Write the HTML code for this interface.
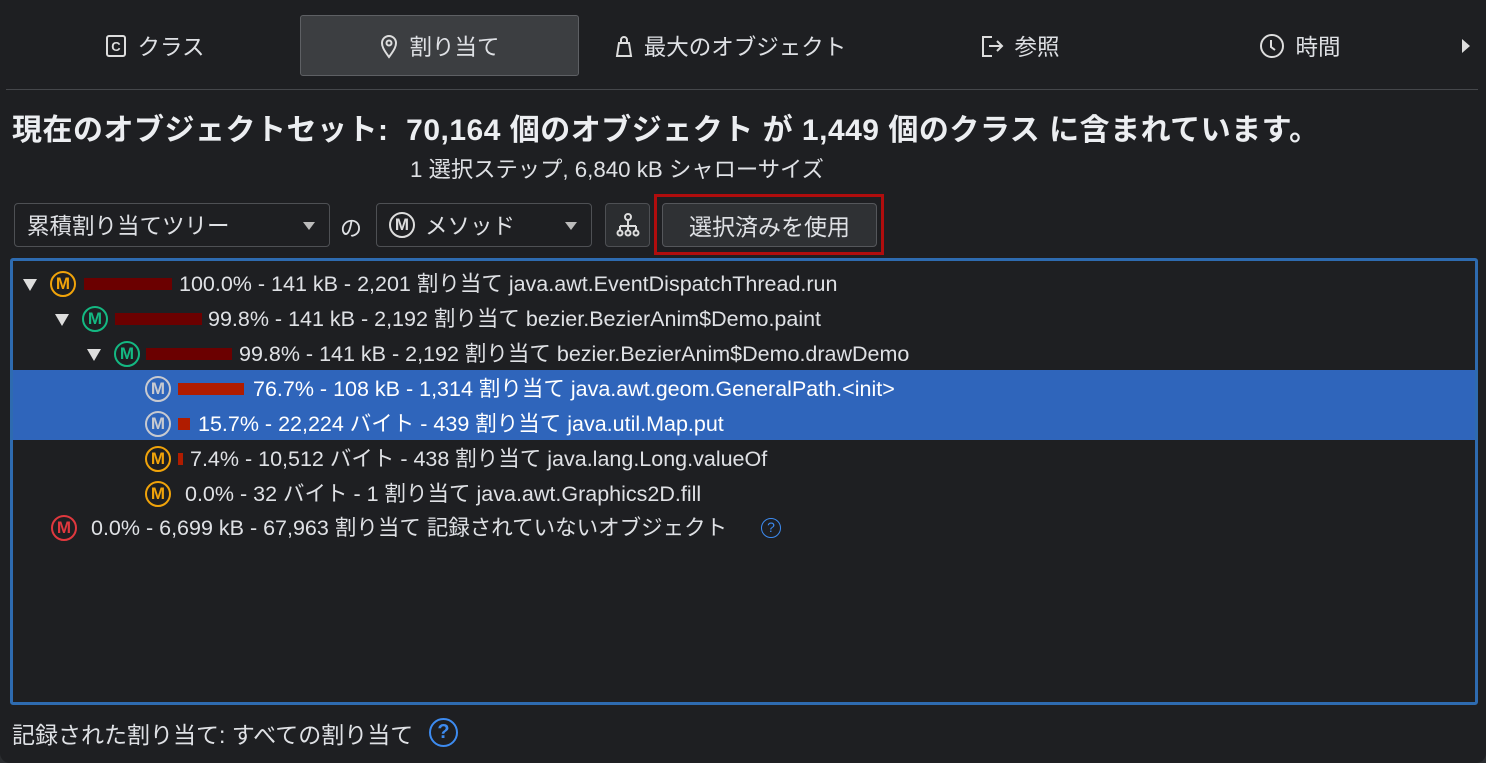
<!DOCTYPE html>
<html><head><meta charset="utf-8"><style>
*{box-sizing:border-box;margin:0;padding:0}
body{width:1486px;height:763px;background:#2b2d30;overflow:hidden;font-family:"Liberation Sans","Noto Sans CJK JP",sans-serif;color:#dfe1e5}
.page{position:absolute;left:0;top:0;width:1486px;height:763px;background:#1e1f22;border-radius:0 0 10px 10px}
.abs{position:absolute;white-space:nowrap}
.tab{position:absolute;top:15px;height:61px;display:flex;align-items:center;justify-content:center;font-size:22.5px;gap:10px}
.sel{background:#3c3e41;border:1px solid #5e6064;border-radius:3px}
.dd{position:absolute;top:203px;height:44px;background:#1e1f22;border:1px solid #4e5054;border-radius:4px;font-size:22.5px;display:flex;align-items:center;padding-left:12px}
.tri{position:absolute;right:14px;top:18px;width:0;height:0;border-left:6px solid transparent;border-right:6px solid transparent;border-top:8px solid #bbb}
.tree{position:absolute;left:10px;top:258px;width:1468px;height:447px;border:3px solid #2e6bb0;border-radius:3px}
.m{position:absolute;width:26px;height:26px;border-radius:50%;border:2.5px solid;font-size:17px;font-weight:bold;display:flex;align-items:center;justify-content:center}
.o{border-color:#f0a30a;color:#f0a30a}.g{border-color:#14b882;color:#14b882}.w{border-color:#c8cad0;color:#c8cad0}.r{border-color:#e0383e;color:#e0383e}
.bar{position:absolute;height:12px}
.ar{position:absolute;width:0;height:0;border-left:7px solid transparent;border-right:7px solid transparent;border-top:12px solid #ddd}
.t{position:absolute;font-size:21.5px;white-space:nowrap;line-height:26px}
</style></head><body><div class="page">
<div class="tab" style="left:30px;width:250px"><svg width="22" height="24"><rect x="2" y="2" width="18" height="20" rx="2" fill="none" stroke="#ddd" stroke-width="2"/><text x="11" y="17" font-size="13" font-weight="bold" fill="#ddd" text-anchor="middle" font-family="Liberation Sans">C</text></svg>クラス</div>
<div class="tab sel" style="left:300px;width:279px"><svg width="20" height="26"><path d="M10 24C4 16 3 13 3 10a7 7 0 0114 0c0 3-1 6-7 14z" fill="none" stroke="#ddd" stroke-width="2"/><circle cx="10" cy="10" r="2.5" fill="none" stroke="#ddd" stroke-width="2"/></svg>割り当て</div>
<div class="tab" style="left:600px;width:260px"><svg width="20" height="24"><path d="M3 22L5 9h10l2 13z M7 9V6a3 3 0 016 0v3" fill="none" stroke="#ddd" stroke-width="2"/></svg>最大のオブジェクト</div>
<div class="tab" style="left:900px;width:240px"><svg width="24" height="24"><path d="M12 3H3v19h9 M9 12h13 M17 7l5 5-5 5" fill="none" stroke="#ddd" stroke-width="2"/></svg>参照</div>
<div class="tab" style="left:1180px;width:240px"><svg width="26" height="26"><circle cx="13" cy="13" r="11" fill="none" stroke="#ddd" stroke-width="2"/><path d="M12 7v7l4 3" fill="none" stroke="#ddd" stroke-width="2"/></svg>時間</div>
<div class="abs" style="left:1462px;top:39px;border-top:7px solid transparent;border-bottom:7px solid transparent;border-left:8px solid #ddd"></div>
<div class="abs" style="left:6px;top:89px;width:1472px;height:1px;background:#45474b"></div>
<div class="abs" style="left:12px;top:105px;font-size:30px;font-weight:bold;color:#eceef1;letter-spacing:0.5px">現在のオブジェクトセット:&nbsp; 70,164 個のオブジェクト が 1,449 個のクラス に含まれています。</div>
<div class="abs" style="left:410px;top:152px;font-size:22.3px">1 選択ステップ, 6,840 kB シャローサイズ</div>
<div class="dd" style="left:14px;width:316px">累積割り当てツリー<div class="tri"></div></div>
<div class="abs" style="left:340px;top:211px;font-size:22px">の</div>
<div class="dd" style="left:376px;width:216px"><div class="m" style="position:static;margin-right:10px;border-color:#ddd;color:#ddd">M</div>メソッド<div class="tri"></div></div>
<div class="dd" style="left:605px;width:45px;padding:0;justify-content:center;background:#2b2d30"><svg width="24" height="26"><circle cx="12" cy="5" r="3" fill="none" stroke="#ddd" stroke-width="2"/><path d="M12 8v6M4 14h16M4 14v5M12 14v5M20 14v5" stroke="#ddd" stroke-width="2" fill="none"/><circle cx="4" cy="21" r="2.5" fill="none" stroke="#ddd" stroke-width="2"/><circle cx="12" cy="21" r="2.5" fill="none" stroke="#ddd" stroke-width="2"/><circle cx="20" cy="21" r="2.5" fill="none" stroke="#ddd" stroke-width="2"/></svg></div>
<div class="abs" style="left:654px;top:194px;width:230px;height:61px;border:3px solid #b00d0d"></div>
<div class="dd" style="left:662px;width:215px;background:#2f3134;justify-content:center;padding:0;border-color:#55575b;font-size:23px">選択済みを使用</div>
<div class="tree"></div>
<div class="abs" style="left:13px;top:370px;width:1462px;height:70px;background:#2f65bb"></div>

<div class="ar" style="left:23px;top:279px"></div><div class="m o" style="left:50px;top:271px">M</div><div class="bar" style="left:84px;top:278px;width:88px;background:#6b0000"></div><div class="t" style="left:179px;top:271px">100.0% - 141 kB - 2,201 割り当て java.awt.EventDispatchThread.run</div>

<div class="ar" style="left:55px;top:314px"></div><div class="m g" style="left:82px;top:306px">M</div><div class="bar" style="left:115px;top:313px;width:87px;background:#6b0000"></div><div class="t" style="left:208px;top:306px">99.8% - 141 kB - 2,192 割り当て bezier.BezierAnim$Demo.paint</div>

<div class="ar" style="left:87px;top:349px"></div><div class="m g" style="left:114px;top:341px">M</div><div class="bar" style="left:146px;top:348px;width:86px;background:#6b0000"></div><div class="t" style="left:239px;top:341px">99.8% - 141 kB - 2,192 割り当て bezier.BezierAnim$Demo.drawDemo</div>

<div class="m w" style="left:145px;top:376px">M</div><div class="bar" style="left:178px;top:383px;width:66px;background:#b01c00"></div><div class="t" style="left:253px;top:376px;color:#fff">76.7% - 108 kB - 1,314 割り当て java.awt.geom.GeneralPath.&lt;init&gt;</div>

<div class="m w" style="left:145px;top:411px">M</div><div class="bar" style="left:178px;top:418px;width:12px;background:#b01c00"></div><div class="t" style="left:198px;top:411px;color:#fff">15.7% - 22,224 バイト - 439 割り当て java.util.Map.put</div>

<div class="m o" style="left:145px;top:446px">M</div><div class="bar" style="left:178px;top:453px;width:5px;background:#b01c00"></div><div class="t" style="left:190px;top:446px">7.4% - 10,512 バイト - 438 割り当て java.lang.Long.valueOf</div>

<div class="m o" style="left:145px;top:481px">M</div><div class="t" style="left:185px;top:481px">0.0% - 32 バイト - 1 割り当て java.awt.Graphics2D.fill</div>

<div class="m r" style="left:51px;top:515px">M</div><div class="t" style="left:91px;top:515px">0.0% - 6,699 kB - 67,963 割り当て 記録されていないオブジェクト</div>
<div class="abs" style="left:761px;top:518px;width:20px;height:20px;border:1.5px solid #3d8bf0;border-radius:50%;color:#3d8bf0;font-size:14px;text-align:center;line-height:17px">?</div>

<div class="abs" style="left:12px;top:716px;font-size:23px">記録された割り当て: すべての割り当て</div>
<div class="abs" style="left:429px;top:718px;width:29px;height:29px;border:2.5px solid #3d8bf0;border-radius:50%;color:#3d8bf0;font-size:20px;font-weight:bold;text-align:center;line-height:24px">?</div>
</div></body></html>
